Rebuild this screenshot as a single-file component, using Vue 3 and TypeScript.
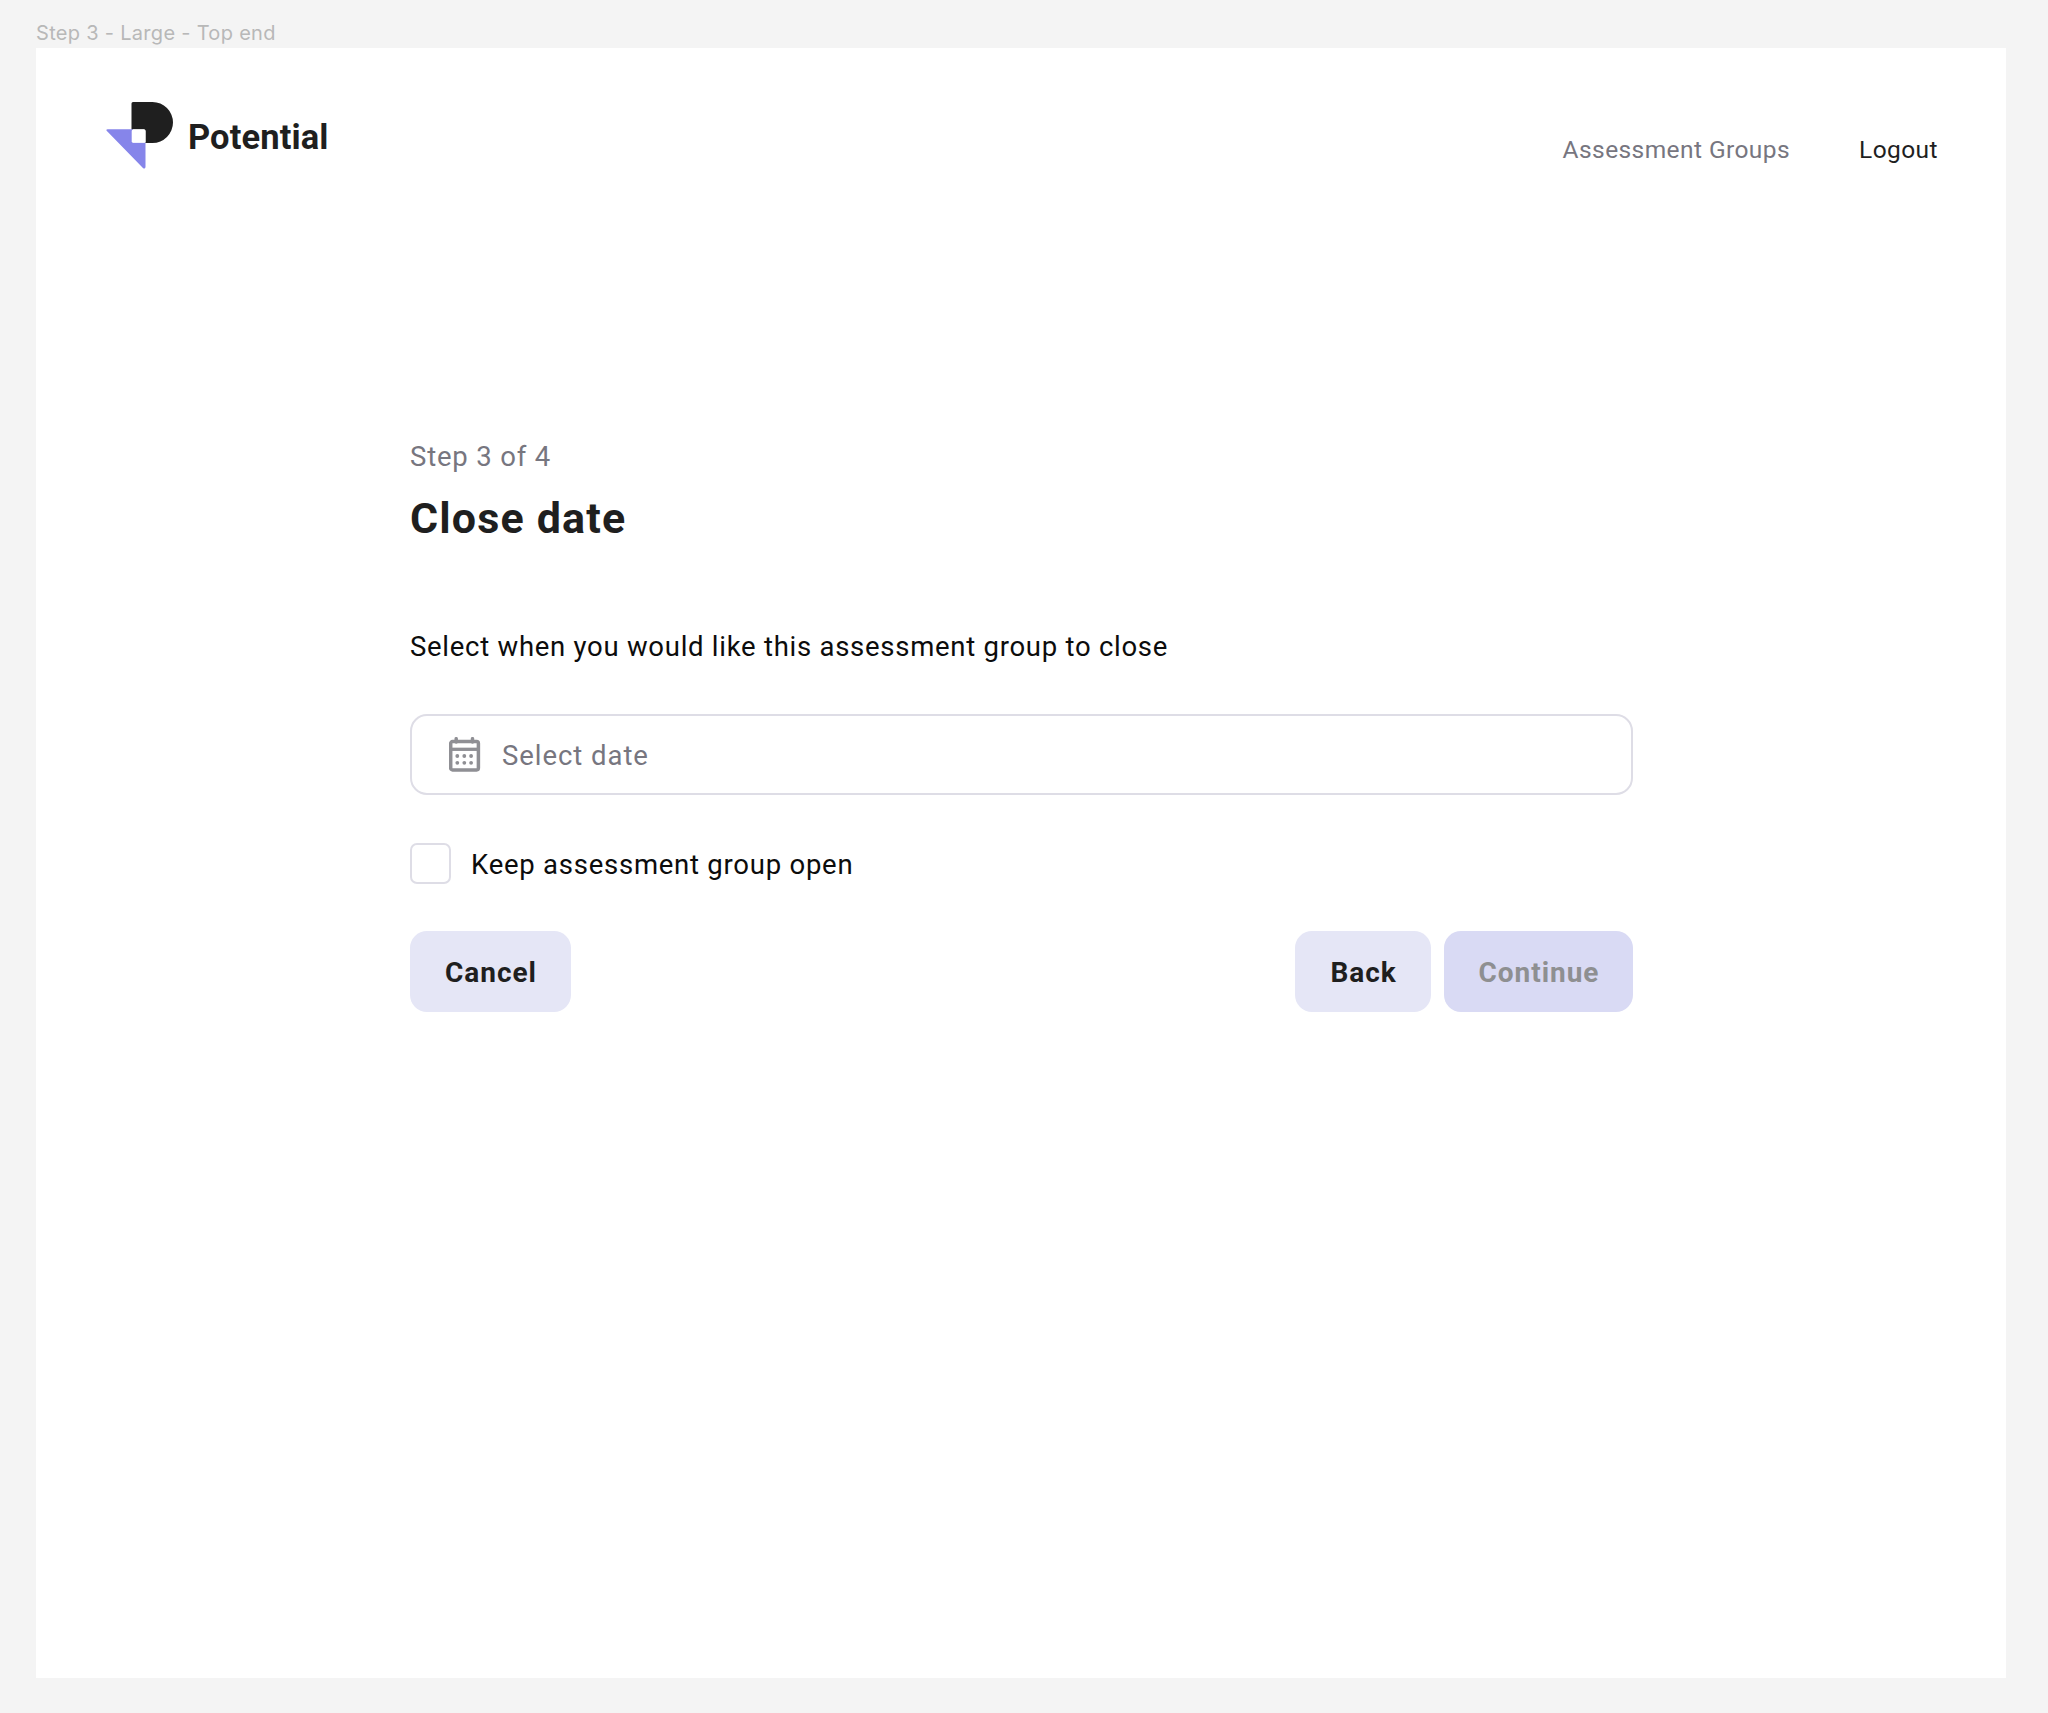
<script setup lang="ts">
import { ref } from 'vue';

const keepOpen = ref<boolean>(false);

const calendarDots = [
  { x: 8.3, y: 19 },
  { x: 15.3, y: 19 },
  { x: 22.1, y: 19 },
  { x: 8.3, y: 25.8 },
  { x: 15.3, y: 25.8 },
  { x: 22.1, y: 25.8 },
];
</script>

<template>
  <div class="canvas">
    <p class="frame-label">Step 3 - Large - Top end</p>
    <main class="frame">
      <header class="header">
        <div class="logo">
          <svg class="logo-mark" width="68" height="68" viewBox="0 0 68 68">
            <path d="M27 27.2H1.7Q-.5 27.5.9 29.1L37.2 66.3Q39.2 67.3 39.5 65.1V40.5H27Z" fill="#8685ea" />
            <path d="M27 0H46.5A20.5 20.5 0 0 1 46.5 41H39.5V29Q39.5 27.2 38 27.2H25.5V1.5Q25.5 0 27 0Z" fill="#1f1f1f" />
            <rect x="25.7" y="27.4" width="13.8" height="13.4" rx="1.6" fill="#fff" />
          </svg>
          <span class="logo-name">Potential</span>
        </div>
        <nav class="nav">
          <a class="nav-link muted">Assessment Groups</a>
          <a class="nav-link logout">Logout</a>
        </nav>
      </header>

      <section class="content">
        <p class="step">Step 3 of 4</p>
        <h1 class="title">Close date</h1>
        <p class="description">Select when you would like this assessment group to close</p>

        <div class="date-input">
          <svg class="calendar" width="32" height="35" viewBox="0 0 32 35">
            <rect x="1.7" y="4.6" width="27.7" height="28.3" rx="1.8" fill="none" stroke="#8f8f94" stroke-width="3.5" />
            <path d="M7.2 1.7V5M23.5 1.7V5" stroke="#8f8f94" stroke-width="3.5" stroke-linecap="round" />
            <path d="M2 12.3H29" stroke="#8f8f94" stroke-width="3.3" />
            <circle v-for="(dot, index) in calendarDots" :key="index" :cx="dot.x" :cy="dot.y" r="1.9" fill="#8f8f94" />
          </svg>
          <span class="placeholder">Select date</span>
        </div>

        <label class="keep-open">
          <input v-model="keepOpen" type="checkbox" class="checkbox" />
          <span class="keep-label">Keep assessment group open</span>
        </label>

        <div class="actions">
          <button class="button cancel">Cancel</button>
          <div class="actions-right">
            <button class="button back">Back</button>
            <button class="button continue" disabled>Continue</button>
          </div>
        </div>
      </section>
    </main>
  </div>
</template>

<style>
body {
  margin: 0;
  background: #f4f4f4;
}
</style>

<style scoped>
.canvas {
  box-sizing: border-box;
  width: 2048px;
  height: 1713px;
  padding: 21px 42px 0 36px;
  background: #f4f4f4;
  font-family: Roboto, "Liberation Sans", sans-serif;
  overflow: hidden;
}

p,
h1 {
  margin: 0;
}

.frame-label {
  height: 27px;
  color: #b8b8b8;
  font-family: Inter, sans-serif;
  font-size: 20px;
  line-height: 24px;
  letter-spacing: 0.3px;
  white-space: nowrap;
}

.frame {
  box-sizing: border-box;
  height: 1630px;
  padding: 54px 68px 0 70px;
  background: #fff;
}

.header {
  display: flex;
  justify-content: space-between;
  height: 335px;
}

.logo {
  display: flex;
}

.logo-name {
  margin: 15px 0 0 14px;
  color: #1f1f1f;
  font-size: 34.5px;
  font-weight: 700;
  line-height: 40px;
  letter-spacing: 0.1px;
}

.nav {
  display: flex;
  gap: 69px;
  padding-top: 30px;
}

.nav-link {
  color: #1f1f1f;
  font-size: 24.5px;
  line-height: 36px;
  letter-spacing: 0.42px;
}

.nav-link.muted {
  color: #77767f;
}

.content {
  width: 1223px;
  margin-left: 304px;
}

.step {
  color: #77767f;
  font-size: 27.5px;
  line-height: 40px;
  letter-spacing: 0.82px;
}

.title {
  margin-top: 13px;
  color: #1f1f1f;
  font-size: 43px;
  font-weight: 700;
  line-height: 56px;
  letter-spacing: 1.15px;
}

.description {
  margin-top: 81px;
  color: #0c0c0c;
  font-size: 27.5px;
  line-height: 40px;
  letter-spacing: 0.73px;
}

.date-input {
  box-sizing: border-box;
  display: flex;
  align-items: center;
  height: 81px;
  margin-top: 47px;
  padding-left: 37px;
  border: 2px solid #dedde6;
  border-radius: 17px;
}

.placeholder {
  padding-top: 1px;
  margin-left: 21px;
  color: #77767f;
  font-size: 27.5px;
  letter-spacing: 0.95px;
}

.keep-open {
  display: flex;
  align-items: center;
  height: 41px;
  margin-top: 48px;
}

.checkbox {
  box-sizing: border-box;
  appearance: none;
  width: 41px;
  height: 41px;
  margin: 0;
  border: 2px solid #dedde6;
  border-radius: 7px;
}

.keep-label {
  padding-top: 1px;
  margin-left: 20px;
  color: #0c0c0c;
  font-size: 27.5px;
  letter-spacing: 0.75px;
}

.actions {
  display: flex;
  justify-content: space-between;
  margin-top: 47px;
}

.actions-right {
  display: flex;
  gap: 13px;
}

.button {
  height: 81px;
  padding: 2px 0 0 1px;
  border: none;
  border-radius: 17px;
  background: #e5e6f6;
  color: #1f1f1f;
  font-family: inherit;
  font-size: 28px;
  font-weight: 700;
  letter-spacing: 0.95px;
}

.cancel {
  width: 161px;
}

.back {
  width: 136px;
}

.continue {
  width: 189px;
  background: #d9daf4;
  color: #8e8f91;
}
</style>
